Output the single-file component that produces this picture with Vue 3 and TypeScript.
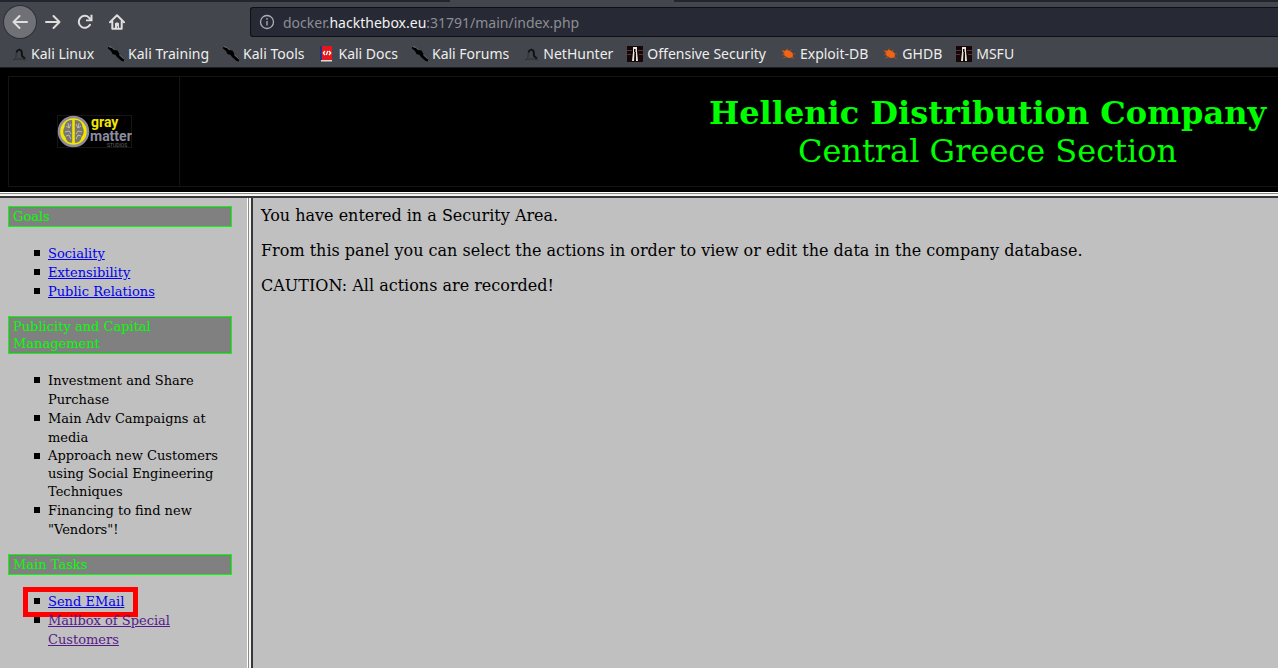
<script setup lang="ts">
type IconName = 'dragon' | 'slash' | 'docs' | 'offsec' | 'bug'

interface Bookmark {
  label: string
  icon: IconName
}

interface Item {
  label: string
  link?: boolean
  visited?: boolean
  marked?: boolean
  dense?: boolean
}

interface Section {
  title: string
  items: Item[]
}

const bookmarks: Bookmark[] = [
  { label: 'Kali Linux', icon: 'dragon' },
  { label: 'Kali Training', icon: 'slash' },
  { label: 'Kali Tools', icon: 'slash' },
  { label: 'Kali Docs', icon: 'docs' },
  { label: 'Kali Forums', icon: 'slash' },
  { label: 'NetHunter', icon: 'dragon' },
  { label: 'Offensive Security', icon: 'offsec' },
  { label: 'Exploit-DB', icon: 'bug' },
  { label: 'GHDB', icon: 'bug' },
  { label: 'MSFU', icon: 'offsec' },
]

const sections: Section[] = [
  {
    title: 'Goals',
    items: [
      { label: 'Sociality', link: true },
      { label: 'Extensibility', link: true },
      { label: 'Public Relations', link: true },
    ],
  },
  {
    title: 'Publicity and Capital Management',
    items: [
      { label: 'Investment and Share Purchase' },
      { label: 'Main Adv Campaigns at media' },
      { label: 'Approach new Customers using Social Engineering Techniques', dense: true },
      { label: 'Financing to find new "Vendors"!' },
    ],
  },
  {
    title: 'Main Tasks',
    items: [
      { label: 'Send EMail', link: true, marked: true },
      { label: 'Mailbox of Special Customers', link: true, visited: true },
    ],
  },
]
</script>

<template>
  <div class="window">
    <header class="chrome">
      <div class="tabs"><span></span><span class="current"></span><span></span></div>
      <div class="toolbar">
        <button class="nav back" aria-label="Back">
          <svg viewBox="0 0 16 16"><path d="M15 8H1.500M7.500 2L1.500 8L7.500 14" /></svg>
        </button>
        <button class="nav" aria-label="Forward">
          <svg viewBox="0 0 16 16"><path d="M1 8h13.500M8.500 2L14.500 8L8.500 14" /></svg>
        </button>
        <button class="nav" aria-label="Reload">
          <svg viewBox="0 0 16 16"><path d="M13 10.800A6 6 0 1 1 12 3.600L14 6" /><path class="solid" d="M15.500 .8V7.200H9V5.500H13.500V.8z" /></svg>
        </button>
        <button class="nav" aria-label="Home">
          <svg viewBox="0 0 16 16"><path d="M1 8.200L8 1.300L15 8.200M3.300 7.500V14.700H12.700V7.500" /><path class="solid" d="M6 15V9.500L7 8.500H9L10 9.500V15H8.800V12.200H8V15z" /></svg>
        </button>
        <div class="address">
          <svg class="info" viewBox="0 0 16 16"><circle cx="8" cy="8" r="6.500" /><path d="M8 7v4.500M8 4v1.700" /></svg>
          <span class="url">docker.<b>hackthebox.eu</b>:31791/main/index.php</span>
        </div>
      </div>
      <nav class="bookmarks">
        <a v-for="b in bookmarks" :key="b.label" href="#">
          <svg viewBox="0 0 16 16">
            <template v-if="b.icon === 'dragon'">
              <path fill="none" stroke="#101316" stroke-width="2" d="M5.500 6.500C6 3.500 9 3 10.500 5C11.500 7 10 9 11.500 10.500L14 12.500" />
              <path fill="none" stroke="#2b2e32" d="M2 14C5 12.500 10 12.500 15 14M5.500 7C4.500 9 6 10.500 4 12.500" />
            </template>
            <template v-else-if="b.icon === 'slash'">
              <path fill="#000" d="M0 1L4 2L6 4L9.500 4.500L11.500 8L11 9L16 13.500V15.500L13.500 15L9 11L7.500 9L4.500 8L3 5L0 2.500z" />
              <path fill="none" stroke="#8b8d91" stroke-width=".5" d="M1 .5L4 1.500L6.500 4M11.500 9L15.500 12.500" />
            </template>
            <template v-else-if="b.icon === 'docs'">
              <path fill="#26337a" d="M2 0h3v14H2z" />
              <path fill="#e5171d" d="M4 0H14v14H4z" />
              <path fill="#ddd" d="M3 14h11v1.500H3z" />
              <path fill="none" stroke="#fff" stroke-width="1.300" d="M7 5L5.300 7L7 9M11 5L12.700 7L11 9M9.800 5L8.300 9" />
            </template>
            <template v-else-if="b.icon === 'offsec'">
              <path fill="#160608" d="M0 0h16v16H0z" />
              <path fill="none" stroke="#573336" d="M0 4.500h5M11 4.500h5M0 8.500h4M12 8.500h4" />
              <path fill="#e9e5de" d="M6 1h4v4l1 10H9V6H7.500L7 15H5L6 6z" />
              <path fill="#000" d="M7 3h1.500v3H7z" />
            </template>
            <template v-else>
              <path fill="#f06412" d="M2.500 4L5 5L6.500 3.500L10 5L12.500 7L13 9L12.500 11.500L9 12L6 11L4 9L3.500 6.500z" />
              <path fill="none" stroke="#b9511c" stroke-width=".8" d="M1.500 5l3 1M2 9l3-1M3 12l4-1.500M10 5l1.500-1.500M12.500 7.500L15 8M11 11l3.500 1.500M7 4V2.500" />
            </template>
          </svg>
          <span>{{ b.label }}</span>
        </a>
      </nav>
    </header>

    <div class="banner">
      <div class="banner-grid">
        <div class="logo-cell">
          <svg class="logo" viewBox="0 0 75 33" role="img" aria-label="gray matter studios">
            <rect x=".5" y=".5" width="74" height="32" fill="none" stroke="#161616" />
            <circle cx="16.500" cy="16.500" r="14.500" fill="#f4e500" stroke="#8d8b9c" stroke-width="2.500" />
            <g fill="#77776f">
              <path d="M15.300 5C11 4.500 7.500 8 7.500 12C5.500 15 6 20 8.500 22C9 26 12 28.500 15.300 27.500z" />
              <path d="M17.700 5C22 4.500 25.500 8 25.500 12C27.500 15 27 20 24.500 22C24 26 21 28.500 17.700 27.500z" />
            </g>
            <path fill="none" stroke="#cfcbb0" stroke-width=".8" d="M9 11l3 2l2-4M8 17l4-1l2 3M9 21l3-1l2 4M24 11l-3 2l-2-4M25 17l-4-1l-2 3M24 21l-3-1l-2 4M11 8l1 5M22 8l-1 5" />
            <path stroke="#f4e500" stroke-width="1.500" d="M16.500 4v25" />
            <text x="33" y="26" class="matter">matter</text>
            <text x="34" y="12" class="gray">gray</text>
            <text x="50" y="32" class="studios">STUDIOS</text>
          </svg>
        </div>
        <div class="title-cell">
          <h1>Hellenic Distribution Company<span>Central Greece Section</span></h1>
        </div>
      </div>
    </div>
    <div class="split-h"></div>

    <div class="frames">
      <aside class="side">
        <section v-for="s in sections" :key="s.title">
          <h2>{{ s.title }}</h2>
          <ul>
            <li v-for="i in s.items" :key="i.label" :class="{ marked: i.marked, dense: i.dense }">
              <a v-if="i.link" href="#" :class="{ visited: i.visited }">{{ i.label }}</a>
              <template v-else>{{ i.label }}</template>
            </li>
          </ul>
        </section>
      </aside>
      <div class="split-v"></div>
      <main class="content">
        <p>You have entered in a Security Area.</p>
        <p>From this panel you can select the actions in order to view or edit the data in the company database.</p>
        <p>CAUTION: All actions are recorded!</p>
      </main>
    </div>
  </div>
</template>

<style>
body {
  margin: 0;
}
</style>

<style scoped>
.window {
  display: flex;
  flex-direction: column;
  height: 100vh;
  overflow: hidden;
  background: #c0c0c0;
  color: #000;
  font-family: 'DejaVu Serif', serif;
}
.chrome {
  flex: none;
  background: #43464c;
  font-family: 'Noto Sans', sans-serif;
}
.tabs {
  display: grid;
  grid-template-columns: 450px 224px 1fr;
  height: 2px;
}
.tabs span {
  background: #23252e;
}
.tabs .current {
  background: #43464c;
}
.toolbar {
  display: flex;
  align-items: center;
  height: 40px;
  padding-left: 4px;
}
.nav {
  flex: none;
  display: grid;
  place-items: center;
  width: 32px;
  height: 32px;
  padding: 0;
  border: 0;
  border-radius: 50%;
  background: none;
}
.nav.back {
  margin-right: 1px;
  background: #707176;
  box-shadow: 0 0 0 1px #2e3035;
}
.nav svg {
  width: 16px;
  height: 16px;
  fill: none;
  stroke: #dededd;
  stroke-width: 2;
  stroke-linecap: round;
  stroke-linejoin: round;
}
.nav .solid {
  fill: #dededd;
  stroke: none;
}
.address {
  flex: 1;
  display: flex;
  align-items: center;
  gap: 8px;
  height: 28px;
  margin-left: 117px;
  padding-left: 8px;
  border: 1px solid #0f1013;
  border-right: 0;
  border-radius: 3px 0 0 3px;
  background: #272934;
  color: #8c8e94;
  font-size: 14px;
}
.address b {
  color: #f2f2f3;
  font-weight: 400;
}
.info {
  width: 16px;
  height: 16px;
  fill: none;
  stroke: #aeb0b4;
  stroke-width: 1.3;
}
.bookmarks {
  display: flex;
  gap: 14px;
  height: 24px;
  padding: 0 0 1px 11px;
  border-bottom: 1px solid #1c1d20;
}
.bookmarks a {
  display: flex;
  align-items: center;
  gap: 4px;
  color: #eeeeec;
  font-size: 14px;
  line-height: 24px;
  text-decoration: none;
  white-space: nowrap;
}
.bookmarks svg {
  flex: none;
  width: 16px;
  height: 16px;
}
.banner {
  flex: none;
  padding: 8px 0 5px 8px;
  background: #000;
}
.banner-grid {
  display: grid;
  grid-template-columns: 171px 1fr;
  border: 1px solid #141414;
  border-right: 0;
}
.logo-cell {
  display: grid;
  place-items: center;
  border-right: 1px solid #141414;
}
.logo {
  width: 75px;
  height: 33px;
}
.logo text {
  font-family: 'Roboto', sans-serif;
  font-weight: 700;
}
.gray {
  fill: #f4e500;
  font-size: 14px;
}
.matter {
  fill: #8d8b9c;
  font-size: 14px;
}
.logo .studios {
  fill: #64626f;
  font-size: 5px;
  font-weight: 400;
}
.title-cell {
  display: flex;
  justify-content: flex-end;
  padding: 17px 12px 16px 0;
}
h1 {
  margin: 0;
  color: #0f0;
  font-size: 32px;
  line-height: 38px;
  text-align: center;
}
h1 span {
  display: block;
  font-weight: 400;
}
.split-h {
  flex: none;
  height: 6px;
  background: linear-gradient(#fff 1px, #8b8b83 1px 2px, #f4f4f0 2px 4px, #35373a 4px);
}
.frames {
  flex: 1;
  display: grid;
  grid-template-columns: 247px 6px 1fr;
  min-height: 0;
}
.side {
  overflow: hidden;
  padding: 8px 15px 0 8px;
  font-size: 13px;
}
h2 {
  margin: 0;
  padding: 1px 4px;
  border: 1px solid #0f0;
  background: #808080;
  color: #0f0;
  font-size: 13px;
  font-weight: 400;
  line-height: 17px;
}
ul {
  margin: 0;
  padding: 17px 0 15px 40px;
  list-style: none;
}
li {
  position: relative;
  line-height: 19px;
}
li.dense {
  line-height: 18px;
}
li::before {
  content: '';
  position: absolute;
  top: 6px;
  left: -14px;
  width: 6px;
  height: 6px;
  background: #000;
}
li a {
  color: #00e;
}
li a.visited {
  color: #551a8b;
}
.marked::after {
  content: '';
  position: absolute;
  top: -5px;
  left: -25px;
  width: 105px;
  height: 20px;
  border: 5px solid #f00;
}
.split-v {
  background: linear-gradient(90deg, #fff 1px, #8b8b83 1px 2px, #f4f4f0 2px 4px, #35373a 4px);
}
.content {
  padding: 8px;
  font-size: 16px;
  line-height: 19px;
}
.content p {
  margin: 0 0 16px;
}
</style>
